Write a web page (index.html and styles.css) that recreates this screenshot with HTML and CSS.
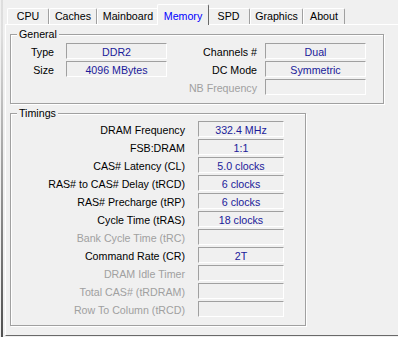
FILE: index.html
```html
<!DOCTYPE html>
<html>
<head>
    <link rel="stylesheet" href="styles.css">
</head>
<body>
    <div class="tabs">
        <div class="tab tab-cpu">CPU</div>
        <div class="tab tab-caches">Caches</div>
        <div class="tab tab-mainboard">Mainboard</div>
        <div class="tab tab-memory selected">Memory</div>
        <div class="tab tab-spd">SPD</div>
        <div class="tab tab-graphics">Graphics</div>
        <div class="tab tab-about">About</div>
    </div>

    <div class="panel">
        <div class="group general">
            <span class="group-title">General</span>
            <div class="general-grid">
                <div class="label">Type</div>
                <div class="value">DDR2</div>
                <div class="label label-right">Channels #</div>
                <div class="value">Dual</div>

                <div class="label">Size</div>
                <div class="value">4096 MBytes</div>
                <div class="label label-right">DC Mode</div>
                <div class="value">Symmetric</div>

                <div class="label label-right disabled col-3">NB Frequency</div>
                <div class="value"></div>
            </div>
        </div>

        <div class="group timings">
            <span class="group-title">Timings</span>
            <div class="timings-grid">
                <div class="label">DRAM Frequency</div>
                <div class="value">332.4 MHz</div>
                <div class="label">FSB:DRAM</div>
                <div class="value">1:1</div>
                <div class="label">CAS# Latency (CL)</div>
                <div class="value">5.0 clocks</div>
                <div class="label">RAS# to CAS# Delay (tRCD)</div>
                <div class="value">6 clocks</div>
                <div class="label">RAS# Precharge (tRP)</div>
                <div class="value">6 clocks</div>
                <div class="label">Cycle Time (tRAS)</div>
                <div class="value">18 clocks</div>
                <div class="label disabled">Bank Cycle Time (tRC)</div>
                <div class="value"></div>
                <div class="label">Command Rate (CR)</div>
                <div class="value">2T</div>
                <div class="label disabled">DRAM Idle Timer</div>
                <div class="value"></div>
                <div class="label disabled">Total CAS# (tRDRAM)</div>
                <div class="value"></div>
                <div class="label disabled">Row To Column (tRCD)</div>
                <div class="value"></div>
            </div>
        </div>
    </div>
</body>
</html>
```

FILE: styles.css
```css
body {
    margin: 0;
    width: 398px;
    height: 337px;
    overflow: hidden;
    background-color: #f0f0f0;
    /* window edge shadow on the left */
    background-image: linear-gradient(to bottom, rgba(60, 60, 60, 0.1) 10%, rgba(40, 40, 40, 0.8) 100%);
    background-size: 2px 100%;
    background-position: 1px 0;
    background-repeat: no-repeat;
    color: #000;
    font-family: "Liberation Sans", Arial, sans-serif;
    font-size: 10.67px;
}

/* tab strip */
.tabs {
    display: flex;
    align-items: flex-end;
    height: 24px;
    padding-left: 7px;
}
.tab {
    box-sizing: border-box;
    height: 16px;
    border-top: 1px solid #fff;
    border-left: 1px solid #fff;
    border-right: 1px solid #a0a0a0;
    border-radius: 2px 2px 0 0;
    text-align: center;
    line-height: 15px;
    white-space: nowrap;
}
.tab.selected {
    position: relative;
    z-index: 1;
    height: 21px;
    margin: 0 -2px -1px -2px;
    padding-top: 4px;
    background-color: #f0f0f0;
    color: #0000ff;
    border-right-color: #696969;
}
.tab-cpu { width: 42px; }
.tab-caches { width: 48px; }
.tab-mainboard { width: 62px; }
.tab-memory { width: 52px; }
.tab-spd { width: 43px; }
.tab-graphics { width: 53px; }
.tab-about { width: 42px; }

/* tab page */
.panel {
    box-sizing: border-box;
    width: 393px;
    height: 312px;
    margin-left: 5px;
    padding: 9px 0 0 4px;
    border-top: 1px solid #fff;
    border-left: 1px solid #fff;
    border-bottom: 1px solid #696969;
    background-color: #f0f0f0;
}

.group {
    position: relative;
    box-sizing: border-box;
    border: 1px solid #a0a0a0;
    box-shadow: inset 1px 1px 0 #fff, 1px 1px 0 #fff;
}
.group-title {
    position: absolute;
    top: -7px;
    left: 6px;
    padding: 0 2px;
    line-height: 13px;
    background-color: #f0f0f0;
}
.general {
    width: 374px;
    height: 70px;
}
.timings {
    width: 296px;
    height: 213px;
    margin-top: 9px;
}

.general-grid {
    display: grid;
    grid-template-columns: 55px 101px 98px 101px;
    grid-auto-rows: 16px;
    row-gap: 2px;
    padding-top: 8px;
}
.timings-grid {
    display: grid;
    grid-template-columns: 187px 86px;
    grid-auto-rows: 16px;
    row-gap: 2px;
    padding-top: 7px;
}

.label {
    text-align: right;
    padding-right: 12px;
    padding-top: 1px;
    line-height: 16px;
    white-space: nowrap;
}
.timings-grid .label {
    padding-right: 13px;
}
.label-right {
    padding-right: 8px;
}
.col-3 {
    grid-column: 3;
}
.disabled {
    color: #a0a0a0;
}
.value {
    box-sizing: border-box;
    border-top: 1px solid #a0a0a0;
    border-left: 1px solid #a0a0a0;
    border-right: 1px solid #fff;
    border-bottom: 1px solid #fff;
    padding-top: 1px;
    color: #1a1a9a;
    text-align: center;
    line-height: 14px;
    white-space: nowrap;
}
```
